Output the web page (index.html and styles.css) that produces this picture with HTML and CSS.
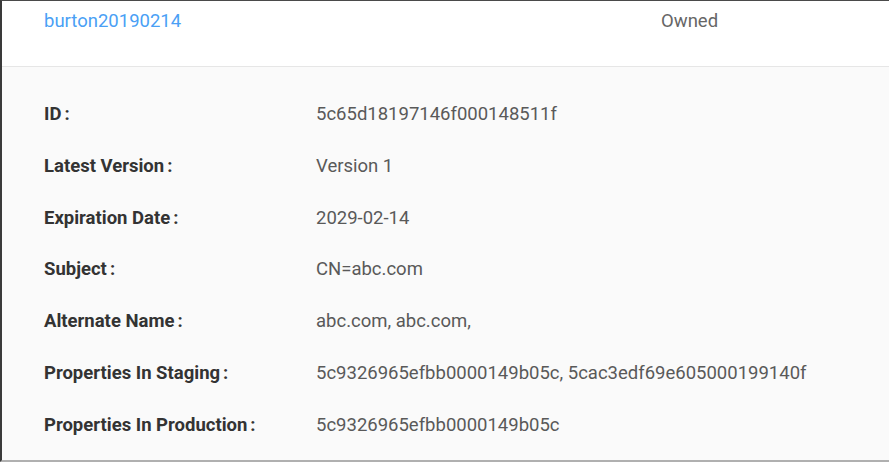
FILE: index.html
```html
<!DOCTYPE html>
<html>
<head>
<meta charset="utf-8">
<link rel="stylesheet" href="styles.css">
</head>
<body>
<div class="frame">
  <div class="header">
    <a class="name">burton20190214</a>
    <span class="owned">Owned</span>
  </div>
  <div class="details">
    <div class="row"><div class="label">ID</div><div class="value">5c65d18197146f000148511f</div></div>
    <div class="row"><div class="label">Latest Version</div><div class="value">Version 1</div></div>
    <div class="row"><div class="label">Expiration Date</div><div class="value">2029-02-14</div></div>
    <div class="row"><div class="label">Subject</div><div class="value">CN=abc.com</div></div>
    <div class="row"><div class="label">Alternate Name</div><div class="value">abc.com, abc.com,</div></div>
    <div class="row"><div class="label">Properties In Staging</div><div class="value">5c9326965efbb0000149b05c, 5cac3edf69e605000199140f</div></div>
    <div class="row"><div class="label">Properties In Production</div><div class="value">5c9326965efbb0000149b05c</div></div>
  </div>
</div>
</body>
</html>
```
FILE: styles.css
```css
html, body {
  margin: 0;
  padding: 0;
  background: #fafafa;
}
.frame {
  width: 889px;
  height: 462px;
  box-sizing: border-box;
  border-top: 1px solid #4a4a4a;
  border-left: 2px solid #3a3a3a;
  border-bottom: 2px solid #b0b0b0;
  font-family: Roboto, "Liberation Sans", sans-serif;
  font-size: 18.5px;
  display: flex;
  flex-direction: column;
  overflow: hidden;
}
.header {
  height: 66px;
  background: #fff;
  border-bottom: 1px solid #e6e6e6;
  display: flex;
  align-items: flex-start;
  padding: 9px 0 0 42px;
  box-sizing: border-box;
}
.name {
  color: #4a9ff5;
  width: 617px;
}
.owned {
  color: #666;
}
.details {
  flex: 1;
  background: #fafafa;
  padding: 37px 0 0 42px;
  display: flex;
  flex-direction: column;
  gap: 30.8px;
}
.row {
  display: grid;
  grid-template-columns: 272px 1fr;
  line-height: 21px;
}
.label {
  font-weight: 700;
  color: #333;
}
.label::after {
  content: ":";
  margin: 0 8px 0 3px;
}
.value {
  color: #595959;
}
```
